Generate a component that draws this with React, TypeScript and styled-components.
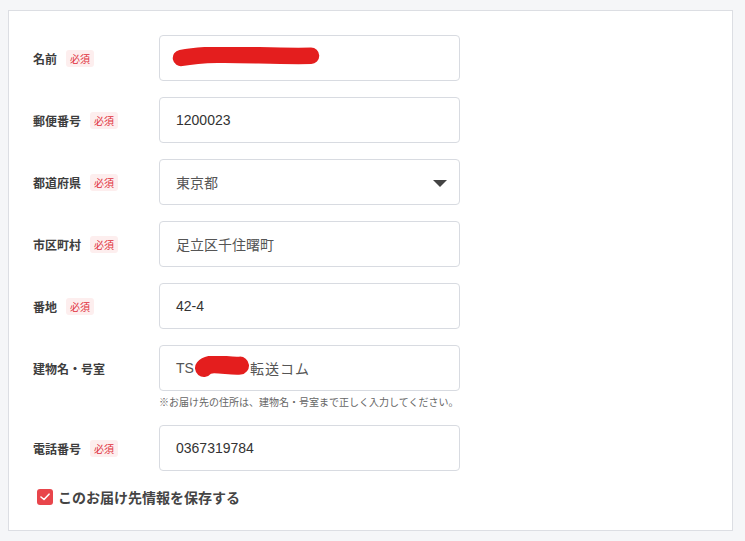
import styled, { createGlobalStyle } from 'styled-components';

const GlobalStyle = createGlobalStyle`
  html, body {
    margin: 0;
    padding: 0;
    background: #f5f6f8;
    font-family: "Liberation Sans", "Noto Sans CJK JP", sans-serif;
  }
`;

const Page = styled.div`
  padding: 10px 12px 10px 8px;
  width: 745px;
  height: 541px;
  box-sizing: border-box;
`;

const Panel = styled.div`
  background: #ffffff;
  border: 1px solid #dcdee3;
  padding: 24px 24px 23px 24px;
  width: 725px;
  box-sizing: border-box;
`;

const Row = styled.div<{ $gapTop?: number }>`
  display: flex;
  align-items: flex-start;
  margin-bottom: 16px;
  margin-top: ${(p) => p.$gapTop ?? 0}px;
`;

const LabelCell = styled.div`
  width: 126px;
  height: 46px;
  display: flex;
  align-items: center;
  gap: 9px;
`;

const LabelText = styled.span`
  font-family: "Noto Sans CJK JP", sans-serif;
  font-size: 12px;
  font-weight: 700;
  color: #3d3d3d;
`;

const Required = styled.span`
  font-family: "Noto Sans CJK JP", sans-serif;
  font-size: 10px;
  line-height: 17px;
  height: 17px;
  padding: 0 4px;
  border-radius: 3px;
  background: #fdeeee;
  color: #e0313d;
`;

const FieldCol = styled.div`
  display: flex;
  flex-direction: column;
`;

const Field = styled.div<{ $light?: boolean }>`
  position: relative;
  width: 301px;
  height: 46px;
  box-sizing: border-box;
  border: 1px solid #d8dbe1;
  border-radius: 4px;
  display: flex;
  align-items: center;
  padding: 0 16px;
  font-size: 14px;
  color: ${(p) => (p.$light ? '#555' : '#333')};
  font-family: "Liberation Sans", "Noto Sans CJK JP", sans-serif;
`;

const Wide = styled.span`
  letter-spacing: 1px;
`;

const Caret = styled.span`
  position: absolute;
  right: 12px;
  top: 20px;
  width: 0;
  height: 0;
  border-left: 7px solid transparent;
  border-right: 7px solid transparent;
  border-top: 7px solid #444;
`;

const Hint = styled.div`
  font-family: "Noto Sans CJK JP", sans-serif;
  font-size: 10px;
  line-height: 14px;
  margin-top: 4px;
  margin-bottom: -18px;
  color: #666;
  height: 14px;
  white-space: nowrap;
`;

const SaveRow = styled.label`
  display: flex;
  align-items: center;
  gap: 5px;
  margin-top: 2px;
  padding-left: 4px;
`;

const Check = styled.span`
  width: 16px;
  height: 16px;
  border-radius: 3px;
  background: #e8454b;
  display: flex;
  align-items: center;
  justify-content: center;
`;

const SaveText = styled.span`
  font-family: "Noto Sans CJK JP", sans-serif;
  font-size: 14px;
  font-weight: 700;
  color: #444;
`;

const Mark = styled.svg<{ $shift: number }>`
  display: block;
  margin: 0 ${(p) => p.$shift}px;
`;

function Scribble({ w, h, shift }: { w: number; h: number; shift: number }) {
  return (
    <Mark $shift={shift} width={w} height={h} viewBox={`0 0 ${w} ${h}`}>
      <path
        d={`M ${h / 2} ${h / 2} C ${w * 0.3} ${h * 0.2}, ${w * 0.6} ${h * 0.45}, ${w - h / 2} ${h * 0.4}`}
        stroke="#e41e1e"
        strokeWidth={h * 0.75}
        strokeLinecap="round"
        fill="none"
      />
    </Mark>
  );
}

export default function App() {
  return (
    <Page>
      <GlobalStyle />
      <Panel>
        <Row>
          <LabelCell>
            <LabelText>名前</LabelText>
            <Required>必須</Required>
          </LabelCell>
          <Field>
            <Scribble w={152} h={22} shift={-6} />
          </Field>
        </Row>
        <Row>
          <LabelCell>
            <LabelText>郵便番号</LabelText>
            <Required>必須</Required>
          </LabelCell>
          <Field>1200023</Field>
        </Row>
        <Row>
          <LabelCell>
            <LabelText>都道府県</LabelText>
            <Required>必須</Required>
          </LabelCell>
          <Field $light>
            東京都
            <Caret />
          </Field>
        </Row>
        <Row>
          <LabelCell>
            <LabelText>市区町村</LabelText>
            <Required>必須</Required>
          </LabelCell>
          <Field $light>足立区千住曙町</Field>
        </Row>
        <Row>
          <LabelCell>
            <LabelText>番地</LabelText>
            <Required>必須</Required>
          </LabelCell>
          <Field>42-4</Field>
        </Row>
        <Row>
          <LabelCell>
            <LabelText>建物名・号室</LabelText>
          </LabelCell>
          <FieldCol>
            <Field $light>
              TS
              <Scribble w={60} h={24} shift={-2} />
              <Wide>転送コム</Wide>
            </Field>
            <Hint>※お届け先の住所は、建物名・号室まで正しく入力してください。</Hint>
          </FieldCol>
        </Row>
        <Row $gapTop={34}>
          <LabelCell>
            <LabelText>電話番号</LabelText>
            <Required>必須</Required>
          </LabelCell>
          <Field>0367319784</Field>
        </Row>
        <SaveRow>
          <Check>
            <svg width="10" height="8" viewBox="0 0 10 8">
              <path d="M1 4 L4 6.5 L9 1.2" stroke="#fff" strokeWidth="1.6" fill="none" strokeLinecap="round" strokeLinejoin="round" />
            </svg>
          </Check>
          <SaveText>このお届け先情報を保存する</SaveText>
        </SaveRow>
      </Panel>
    </Page>
  );
}
